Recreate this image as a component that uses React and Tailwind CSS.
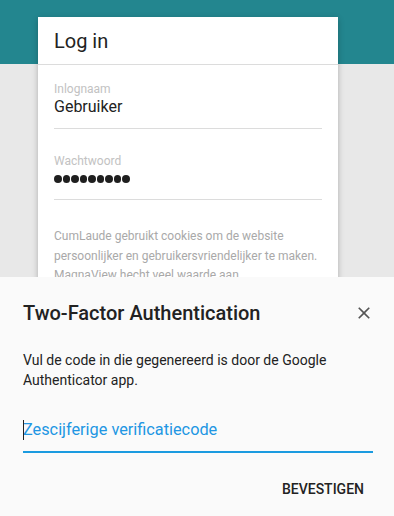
import React from "react";

function Dots() {
  return (
    <div className="flex h-[20px] items-center gap-[1px]">
      {Array.from({ length: 9 }).map((_, i) => (
        <span key={i} className="block h-[7.5px] w-[7.5px] rounded-full bg-[#1f1f1f]" />
      ))}
    </div>
  );
}

export default function App() {
  return (
    <div
      className="relative h-[516px] w-[394px] overflow-hidden bg-[#e8e8e8]"
      style={{ fontFamily: "Roboto, 'Noto Sans', sans-serif" }}
    >
      <div className="h-[64px] bg-[#23868f]" />
      <div className="-mt-[47px] ml-[38px] w-[300px] bg-white shadow-[0_2px_6px_rgba(0,0,0,0.25)]">
        <div className="flex h-[48px] items-center border-b border-[#dcdcdc] pl-[16px]">
          <span className="text-[20px] leading-[26px] text-[#222]">Log in</span>
        </div>
        <div className="px-[16px] pt-[16px]">
          <div className="text-[12px] leading-[16px] text-[#c2c2c2]">Inlognaam</div>
          <div className="border-b border-[#dcdcdc] pb-[11px] text-[16px] leading-[20px] text-[#222]">
            Gebruiker
          </div>
          <div className="mt-[24px] text-[12px] leading-[16px] text-[#c2c2c2]">Wachtwoord</div>
          <div className="border-b border-[#dcdcdc] pb-[10px]">
            <Dots />
          </div>
          <p className="mt-[27px] pb-[40px] text-[12px] leading-[19.5px] text-[#a9a9a9]">
            CumLaude gebruikt cookies om de website persoonlijker en gebruikersvriendelijker te maken.
            MagnaView hecht veel waarde aan gegevensbescherming en uw privacy.
          </p>
        </div>
      </div>

      <div className="absolute bottom-0 left-0 right-0 top-[277px] bg-[#fafafa] pl-[23px] pr-[21px] pt-[24px]">
        <div className="flex items-center justify-between">
          <h2 className="text-[20px] font-medium leading-[24px] text-[#222]">Two-Factor Authentication</h2>
          <svg
            viewBox="0 0 24 24"
            className="mr-[-1px] h-[20px] w-[20px] fill-[#555]"
          >
            <path d="M19 6.41L17.59 5 12 10.59 6.41 5 5 6.41 10.59 12 5 17.59 6.41 19 12 13.41 17.59 19 19 17.59 13.41 12z" />
          </svg>
        </div>
        <p className="mt-[25px] text-[14px] leading-[20px] text-[#222]">
          Vul de code in die gegenereerd is door de Google Authenticator app.
        </p>
        <div className="mt-[28px] flex items-center border-b-2 border-[#1b9be0] pb-[9px]">
          <span className="relative text-[16.3px] leading-[24px] text-[#2196e3]">
            <span className="absolute left-0 top-[2px] h-[20px] w-px bg-[#222]" />
            Zescijferige verificatiecode
          </span>
        </div>
        <div className="mt-[26px] flex justify-end pr-[9px]">
          <span className="text-[14px] font-medium leading-[20px] text-[#222]">BEVESTIGEN</span>
        </div>
      </div>
    </div>
  );
}
